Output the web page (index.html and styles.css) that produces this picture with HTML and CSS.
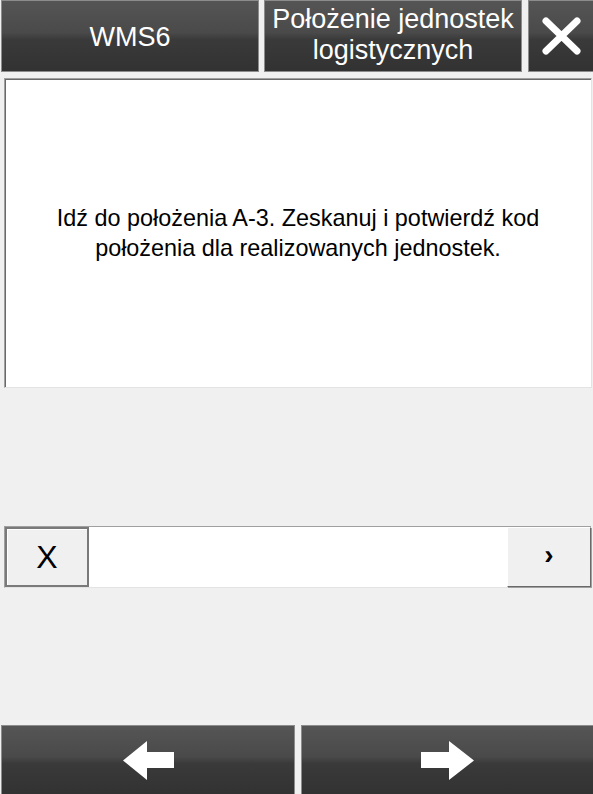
FILE: index.html
```html
<!DOCTYPE html>
<html lang="pl">
<head>
    <meta charset="UTF-8">
    <meta name="viewport" content="width=device-width, initial-scale=1.0">
    <title>WMS6 - Położenie jednostek logistycznych</title>
    <link rel="stylesheet" href="styles.css">
</head>
<body>
    <div class="topbar">
        <button class="dark-btn app-name">WMS6</button>
        <button class="dark-btn screen-title">Położenie jednostek logistycznych</button>
        <button class="dark-btn close-btn" aria-label="Zamknij">
            <svg width="41" height="38" viewBox="0 0 41 38">
                <path d="M5 4 L36 34 M36 4 L5 34" stroke="#fff" stroke-width="7" stroke-linecap="round" fill="none"/>
            </svg>
        </button>
    </div>

    <div class="message-box">
        <p>Idź do położenia A-3. Zeskanuj i potwierdź kod położenia dla realizowanych jednostek.</p>
    </div>

    <div class="scan-row">
        <button class="light-btn clear-btn">X</button>
        <input type="text" class="scan-input">
        <button class="light-btn go-btn">›</button>
    </div>

    <div class="bottombar">
        <button class="dark-btn" aria-label="Wstecz">
            <svg width="51" height="39" viewBox="0 0 51 39">
                <polygon points="0,19.5 24,0 24,11 51,11 51,27 24,27 24,39" fill="#fff"/>
            </svg>
        </button>
        <button class="dark-btn" aria-label="Dalej">
            <svg width="53" height="39" viewBox="0 0 53 39">
                <polygon points="53,19.5 28,0 28,11 0,11 0,27 28,27 28,39" fill="#fff"/>
            </svg>
        </button>
    </div>
</body>
</html>
```

FILE: styles.css
```css
* {
    margin: 0;
    padding: 0;
    box-sizing: border-box;
}

body {
    width: 593px;
    height: 794px;
    background: #f0f0f0;
    font-family: 'Liberation Sans', Arial, sans-serif;
    display: flex;
    flex-direction: column;
    overflow: hidden;
}

button {
    font-family: inherit;
    cursor: pointer;
}

.dark-btn {
    background: linear-gradient(180deg, #555555 0%, #4a4a4a 45%, #3a3a3a 55%, #323232 100%);
    border: 1px solid #8c8c8c;
    color: #fff;
    display: flex;
    align-items: center;
    justify-content: center;
    text-align: center;
}

.topbar {
    display: grid;
    grid-template-columns: 258px 258px 1fr;
    column-gap: 5px;
    height: 72px;
    padding-left: 1px;
}

.app-name {
    font-size: 27px;
    padding-top: 2px;
}

.screen-title {
    font-size: 27px;
    line-height: 31px;
    padding-bottom: 2px;
}

.close-btn {
    margin-left: 1px;
    margin-right: -1px;
}

.message-box {
    margin: 6px 1px 0 4px;
    height: 310px;
    background: #fff;
    border-top: 1px solid #a0a0a0;
    border-left: 1px solid #a0a0a0;
    border-right: 1px solid #e3e3e3;
    border-bottom: 1px solid #e3e3e3;
    box-shadow: inset 1px 1px 0 #696969;
    display: flex;
    align-items: center;
    justify-content: center;
    padding: 0 20px;
}

.message-box p {
    font-size: 23.4px;
    line-height: 30px;
    text-align: center;
    color: #000;
}

.scan-row {
    margin: 138px 2px 0 4px;
    height: 62px;
    display: flex;
    background: #fff;
    border-top: 1px solid #a0a0a0;
    border-left: 1px solid #a0a0a0;
    border-bottom: 1px solid #e3e3e3;
}

.light-btn {
    width: 84px;
    background: #f0f0f0;
    color: #000;
    border: 1px solid #fff;
    border-right-color: #696969;
    border-bottom-color: #696969;
    box-shadow: 1px 1px 0 #a0a0a0;
}

.clear-btn {
    font-size: 32px;
    border: 2px solid #7a7a7a;
    box-shadow: inset 1px 1px 0 #fff;
}

.go-btn {
    font-size: 28px;
    font-weight: bold;
    line-height: 1;
    padding-bottom: 4px;
}

.scan-input {
    flex: 1;
    border: none;
    outline: none;
    background: #fff;
    font-size: 24px;
    padding: 0 8px;
}

.bottombar {
    margin-top: auto;
    display: grid;
    grid-template-columns: 294px 1fr;
    column-gap: 6px;
    height: 69px;
    padding-left: 1px;
}

.bottombar .dark-btn {
    border-bottom: none;
}

.bottombar .dark-btn:last-child {
    border-right: none;
}
```
